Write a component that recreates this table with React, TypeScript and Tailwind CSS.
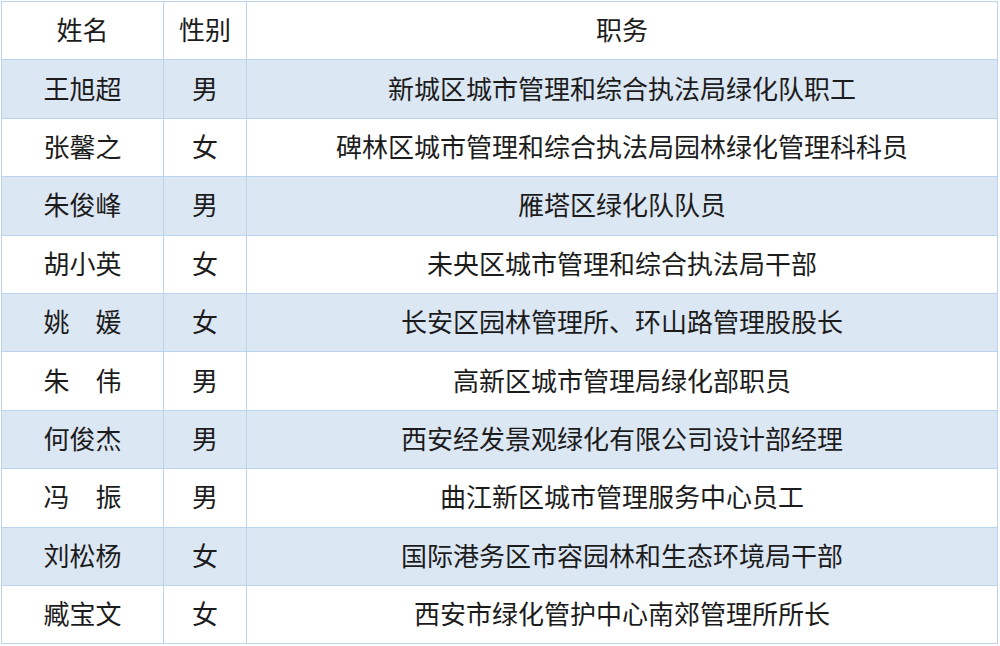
import React from 'react';

type Row = { name: string; sex: string; job: string };

const rows: Row[] = [
  { name: '王旭超', sex: '男', job: '新城区城市管理和综合执法局绿化队职工' },
  { name: '张馨之', sex: '女', job: '碑林区城市管理和综合执法局园林绿化管理科科员' },
  { name: '朱俊峰', sex: '男', job: '雁塔区绿化队队员' },
  { name: '胡小英', sex: '女', job: '未央区城市管理和综合执法局干部' },
  { name: '姚　媛', sex: '女', job: '长安区园林管理所、环山路管理股股长' },
  { name: '朱　伟', sex: '男', job: '高新区城市管理局绿化部职员' },
  { name: '何俊杰', sex: '男', job: '西安经发景观绿化有限公司设计部经理' },
  { name: '冯　振', sex: '男', job: '曲江新区城市管理服务中心员工' },
  { name: '刘松杨', sex: '女', job: '国际港务区市容园林和生态环境局干部' },
  { name: '臧宝文', sex: '女', job: '西安市绿化管护中心南郊管理所所长' },
];

const cell = 'border border-[#bcd3ec] text-center align-middle pb-[3px]';

export default function App() {
  return (
    <div className="w-[1000px] h-[646px] bg-white pt-px pl-px">
      <table
        className="border-collapse table-fixed w-[997px] text-[26px] leading-none text-[#1c1c1c]"
        style={{ fontFamily: '"Noto Sans CJK SC", "Noto Sans", sans-serif' }}
      >
        <colgroup>
          <col className="w-[162px]" />
          <col className="w-[83px]" />
          <col />
        </colgroup>
        <thead>
          <tr className="h-[58.4px]">
            <th className={`${cell} font-normal`}>姓名</th>
            <th className={`${cell} font-normal`}>性别</th>
            <th className={`${cell} font-normal`}>职务</th>
          </tr>
        </thead>
        <tbody>
          {rows.map((r, i) => (
            <tr key={r.name} className={`h-[58.4px] ${i % 2 === 0 ? 'bg-[#dce7f4]' : 'bg-white'}`}>
              <td className={cell}>{r.name}</td>
              <td className={cell}>{r.sex}</td>
              <td className={cell}>{r.job}</td>
            </tr>
          ))}
        </tbody>
      </table>
    </div>
  );
}
